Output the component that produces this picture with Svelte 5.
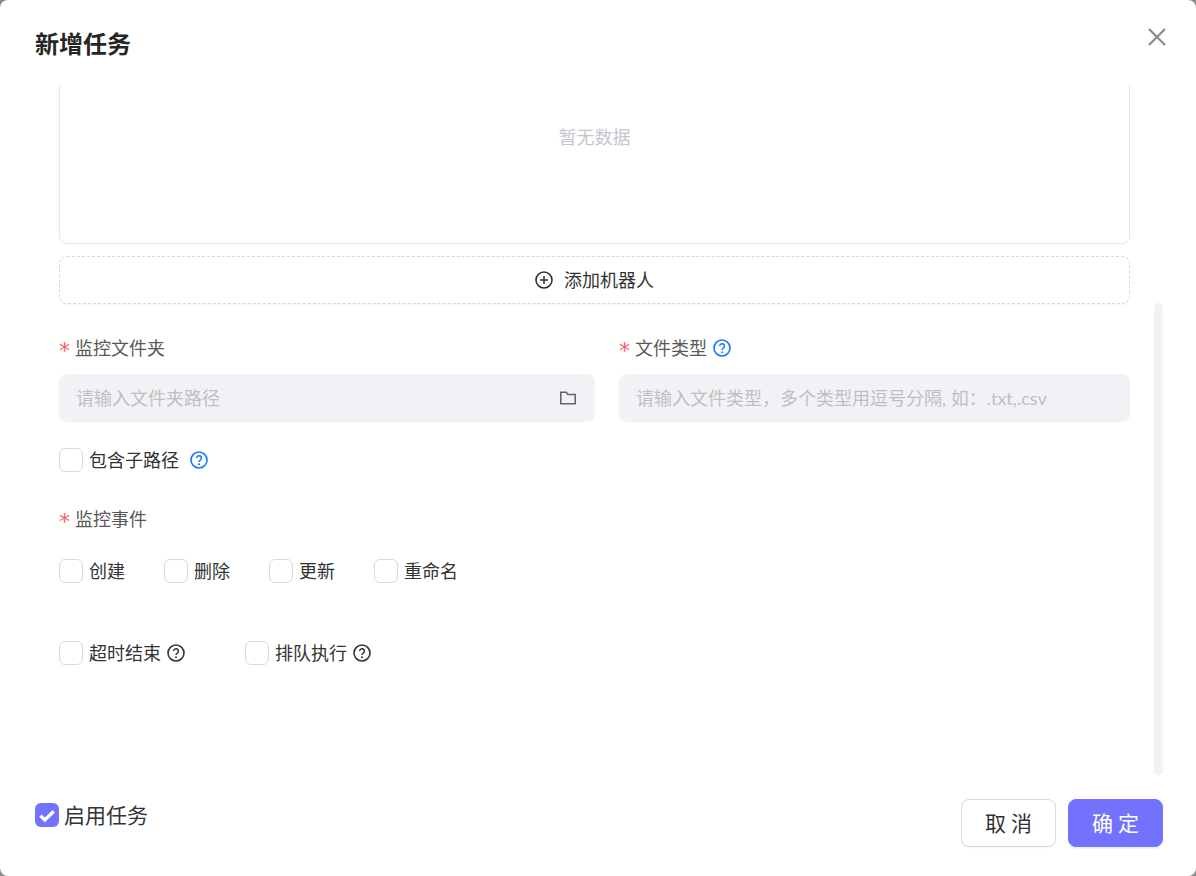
<script>
  const events = ['创建', '删除', '更新', '重命名'];
</script>

{#snippet help(cls)}
  <svg class={cls} viewBox="0 0 18 18" width="18" height="18" fill="none" stroke="currentColor" stroke-width="1.6" aria-hidden="true">
    <circle cx="9" cy="9" r="8" />
    <path d="M6.6 7.1a2.4 2.4 0 1 1 3.7 2c-.9.5-1.3 1-1.3 2" stroke-width="1.5" />
    <circle cx="9" cy="13.3" r="1" fill="currentColor" stroke="none" />
  </svg>
{/snippet}

<div class="modal">
  <header class="head">
    <h1>新增任务</h1>
    <svg class="close" viewBox="0 0 20 20" width="20" height="20" fill="none" stroke="#8a8a8a" stroke-width="2.2" aria-hidden="true">
      <path d="M2 2l16 16M18 2L2 18" />
    </svg>
  </header>

  <div class="body">
    <div class="scrollbar"></div>
    <div class="table"><span>暂无数据</span></div>
    <button class="add">
      <svg viewBox="0 0 18 18" width="18" height="18" fill="none" stroke="#333" stroke-width="1.6" aria-hidden="true">
        <circle cx="9" cy="9" r="8" />
        <path d="M9 5v8M5 9h8" />
      </svg>
      <span class="t">添加机器人</span>
    </button>

    <div class="row">
      <div class="field">
        <div class="label"><i>*</i><span class="t">监控文件夹</span></div>
        <div class="input"><span class="t">请输入文件夹路径</span>
          <svg viewBox="0 0 18 16" width="18" height="16" fill="none" stroke="#666" stroke-width="1.6" aria-hidden="true">
            <path d="M1.8 2.3h5.4l1.8 2.2h7.2v9.2H1.8z" />
          </svg>
        </div>
      </div>
      <div class="field">
        <div class="label"><i>*</i><span class="t">文件类型</span>{@render help('blue ml6')}</div>
        <div class="input"><span class="t">请输入文件类型，多个类型用逗号分隔, 如：.txt,.csv</span></div>
      </div>
    </div>

    <div class="check first">
      <span class="box"></span><span class="t">包含子路径</span>{@render help('blue ml11')}
    </div>

    <div class="label events-label"><i>*</i><span class="t">监控事件</span></div>
    <div class="events">
      {#each events as e}
        <div class="check ev"><span class="box"></span><span class="t">{e}</span></div>
      {/each}
    </div>

    <div class="options">
      <div class="check opt"><span class="box"></span><span class="t">超时结束</span>{@render help('dark ml6')}</div>
      <div class="check"><span class="box"></span><span class="t">排队执行</span>{@render help('dark ml6')}</div>
    </div>
  </div>

  <footer class="foot">
    <div class="enable">
      <span class="box on">
        <svg viewBox="0 0 24 24" width="24" height="24" fill="none" stroke="#fff" stroke-width="3.4" aria-hidden="true">
          <path d="M5.4 12.6l4.4 4.3 9-8.6" />
        </svg>
      </span>
      <span class="t">启用任务</span>
    </div>
    <div class="btns">
      <button class="btn">取 消</button>
      <button class="btn primary">确 定</button>
    </div>
  </footer>
</div>

<style>
  :global(body) {
    background: #8a8a8a;
  }
  .modal {
    width: 1196px;
    height: 876px;
    box-sizing: border-box;
    background: #fff;
    border-radius: 8px;
    display: flex;
    flex-direction: column;
    font-family: Roboto, "Noto Sans CJK SC", "Noto Sans", sans-serif;
    font-size: 18px;
    line-height: 28px;
    color: #333;
    overflow: hidden;
  }
  .t {
    margin-top: 2px;
  }
  .head {
    height: 85px;
    flex: none;
    box-sizing: border-box;
    padding: 27px 29px 0 35px;
    display: flex;
    justify-content: space-between;
    align-items: flex-start;
  }
  h1 {
    margin: 0;
    font-size: 24px;
    line-height: 36px;
    font-weight: 700;
    color: #262626;
  }
  .close {
    display: block;
  }
  .body {
    position: relative;
    height: 691px;
    flex: none;
    padding-left: 59px;
    width: 1071px;
  }
  .scrollbar {
    position: absolute;
    left: 1154px;
    top: 218px;
    width: 9px;
    height: 472px;
    border-radius: 5px;
    background: #f1f1f6;
  }
  .table {
    box-sizing: border-box;
    height: 159px;
    border: 1px solid #e6e6e6;
    border-top: none;
    border-radius: 0 0 8px 8px;
    text-align: center;
    padding-top: 39px;
    color: #c4c6cf;
  }
  .add {
    box-sizing: border-box;
    width: 100%;
    height: 48px;
    margin-top: 12px;
    display: flex;
    align-items: center;
    justify-content: center;
    gap: 11px;
    background: #fff;
    border: 1px dashed #d9d9d9;
    border-radius: 8px;
    font: inherit;
    color: #333;
    padding: 0;
    box-shadow: 0 2px 0 rgba(0, 0, 0, 0.02);
  }
  .row {
    display: grid;
    grid-template-columns: 536px 511px;
    column-gap: 24px;
    margin-top: 30px;
  }
  .label {
    display: flex;
    align-items: center;
    height: 28px;
    color: #595959;
  }
  .label i {
    font-style: normal;
    color: #ff5a5f;
    width: 16px;
    font-family: "DejaVu Sans Mono", monospace;
    font-size: 22px;
    line-height: 28px;
    padding-top: 3px;
    margin-left: -1px;
    margin-right: 1px;
    box-sizing: border-box;
    height: 28px;
  }
  .input {
    box-sizing: border-box;
    height: 48px;
    margin-top: 12px;
    padding: 0 18px;
    border-radius: 8px;
    background: #f2f2f6;
    display: flex;
    align-items: center;
    justify-content: space-between;
    color: #bfbfbf;
  }
  .input .t {
    margin: 0 0 0 -1px;
    font-family: Lato, "Noto Sans CJK SC", sans-serif;
  }
  .blue {
    color: #1677ff;
  }
  .dark {
    color: #333;
  }
  .ml6 {
    margin-left: 6px;
  }
  .ml11 {
    margin-left: 11px;
  }
  .check {
    display: flex;
    align-items: center;
    height: 24px;
  }
  .box {
    box-sizing: border-box;
    width: 24px;
    height: 24px;
    flex: none;
    border: 1px solid #d9d9d9;
    border-radius: 6px;
    margin-right: 6px;
    background: #fff;
  }
  .first {
    margin-top: 26px;
  }
  .events-label {
    margin-top: 33px;
  }
  .events {
    display: flex;
    margin-top: 26px;
  }
  .ev {
    width: 105px;
  }
  .options {
    display: flex;
    margin-top: 58px;
  }
  .opt {
    width: 186px;
  }
  .foot {
    flex: 1;
    display: flex;
    justify-content: space-between;
    padding: 23px 33px 0 35px;
  }
  .enable {
    display: flex;
    align-items: center;
    height: 34px;
    margin-top: -1px;
    font-size: 21px;
    color: #333;
  }
  .box.on {
    border: none;
    background: #7272ff;
    margin-right: 5px;
    display: block;
  }
  .box.on svg {
    display: block;
  }
  .btns {
    display: flex;
    gap: 12px;
  }
  .btn {
    box-sizing: border-box;
    width: 95px;
    height: 48px;
    padding: 2px 0 0;
    border: 1px solid #d9d9d9;
    border-radius: 8px;
    background: #fff;
    font: inherit;
    font-size: 21px;
    color: #333;
    box-shadow: 0 2px 0 rgba(0, 0, 0, 0.02);
  }
  .primary {
    background: #7272ff;
    border-color: #7272ff;
    color: #fff;
    box-shadow: 0 2px 0 rgba(114, 114, 255, 0.1);
  }
</style>
